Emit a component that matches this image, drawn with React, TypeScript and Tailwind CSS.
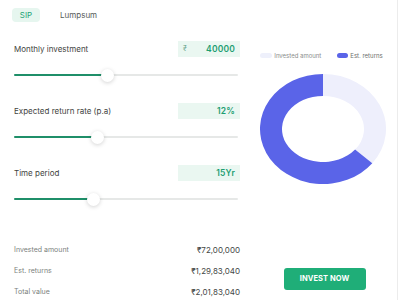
import React from "react";

function Slider({ pct }: { pct: number }) {
  return (
    <div className="relative h-[12px] w-[224px] flex items-center">
      <div className="h-[2px] w-full bg-[#e6e8e7] rounded-full" />
      <div className="absolute left-0 top-[5px] h-[2px] bg-[#1f8f69] rounded-full" style={{ width: `${pct}px` }} />
      <div
        className="absolute top-0 h-[13px] w-[13px] rounded-full bg-white shadow-[0_1px_4px_rgba(0,0,0,0.18)]"
        style={{ left: `${pct - 3}px` }}
      />
    </div>
  );
}

function Field({ label, value, prefix, pct }: { label: string; value: string; prefix?: string; pct: number }) {
  return (
    <div className="flex flex-col">
      <div className="flex items-center justify-between w-[226px]">
        <span className="text-[8px] text-[#3f4441]">{label}</span>
        <div className="w-[62px] h-[16px] bg-[#eaf7f1] flex items-center justify-between px-[5px]">
          <span className="text-[7px] text-[#6aa58d]">{prefix ?? ""}</span>
          <span className="text-[8.5px] font-semibold text-[#1e9e72] tracking-[0.02em]">{value}</span>
        </div>
      </div>
      <div className="mt-[12px]">
        <Slider pct={pct} />
      </div>
    </div>
  );
}

function Donut() {
  const cx = 63, cy = 55;
  const rxO = 63, ryO = 55, rxI = 41, ryI = 33;
  const inv = 0.357;
  const a = inv * Math.PI * 2;
  const px = (rx: number, ry: number, ang: number) => [cx + rx * Math.sin(ang), cy - ry * Math.cos(ang)];
  const [ox1, oy1] = px(rxO, ryO, 0);
  const [ox2, oy2] = px(rxO, ryO, a);
  const [ix1, iy1] = px(rxI, ryI, 0);
  const [ix2, iy2] = px(rxI, ryI, a);
  const invPath = `M${ox1},${oy1} A${rxO},${ryO} 0 0 1 ${ox2},${oy2} L${ix2},${iy2} A${rxI},${ryI} 0 0 0 ${ix1},${iy1} Z`;
  const retPath = `M${ox2},${oy2} A${rxO},${ryO} 0 1 1 ${ox1},${oy1} L${ix1},${iy1} A${rxI},${ryI} 0 1 0 ${ix2},${iy2} Z`;
  return (
    <svg width="126" height="110" viewBox="0 0 126 110">
      <path d={invPath} fill="#eeeffc" />
      <path d={retPath} fill="#5a64e8" />
    </svg>
  );
}

export default function App() {
  return (
    <div className="w-[400px] h-[300px] bg-white flex overflow-hidden" style={{ fontFamily: "Inter, 'Open Sans', sans-serif" }}>
      <div className="w-[240px] pl-[12px] flex flex-col">
        <div className="flex items-center mt-[8px] h-[14px]">
          <div className="h-[14px] w-[28px] rounded-[4px] bg-[#e6f6ef] flex items-center justify-center text-[8px] text-[#1ea477]">SIP</div>
          <span className="ml-[20px] text-[8px] text-[#555a58]">Lumpsum</span>
        </div>
        <div className="pl-[2px] mt-[19px] flex flex-col gap-[22px]">
          <Field label="Monthly investment" value="40000" prefix="₹" pct={90} />
          <Field label="Expected return rate (p.a)" value="12%" pct={80} />
          <Field label="Time period" value="15Yr" pct={76} />
        </div>
        <div className="pl-[2px] mt-[39px] flex flex-col gap-[9px] w-[228px]">
          {[
            ["Invested amount", "₹72,00,000"],
            ["Est. returns", "₹1,29,83,040"],
            ["Total value", "₹2,01,83,040"],
          ].map(([l, v]) => (
            <div key={l} className="flex items-center justify-between h-[12px]">
              <span className="text-[7px] text-[#7b7f7d]">{l}</span>
              <span className="text-[8px] text-[#444746]">{v}</span>
            </div>
          ))}
        </div>
      </div>
      <div className="flex-1 flex flex-col items-center border-r border-[#ececec] mr-[2px]">
        <div className="flex items-center mt-[51px] h-[8px] ml-[6px]">
          <div className="w-[12px] h-[5px] rounded-full bg-[#eef0fb]" />
          <span className="ml-[2px] text-[6px] text-[#8a8d8c]">Invested amount</span>
          <div className="ml-[16px] w-[11px] h-[5px] rounded-full bg-[#5a64e8]" />
          <span className="ml-[2px] text-[6px] text-[#6c6f6e]">Est. returns</span>
        </div>
        <div className="mt-[15px] ml-[8px]">
          <Donut />
        </div>
        <button className="mt-[84px] ml-[12px] w-[82px] h-[22px] rounded-[3px] bg-[#1fae78] text-white text-[7.5px] font-bold tracking-[0.01em]">
          INVEST NOW
        </button>
      </div>
    </div>
  );
}
